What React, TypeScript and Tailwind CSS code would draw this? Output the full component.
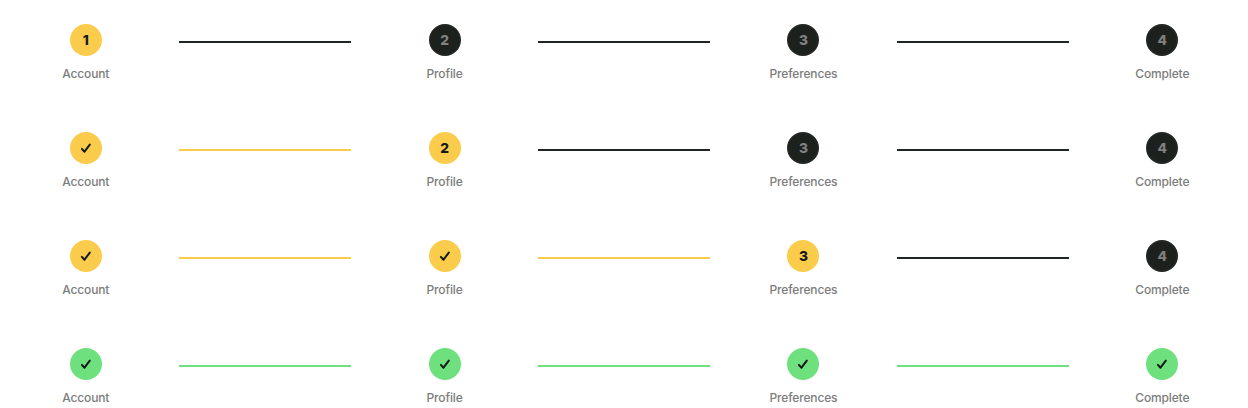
import React from "react";

const labels = ["Account", "Profile", "Preferences", "Complete"];

function Check() {
  return (
    <svg className="size-4" viewBox="0 0 16 16" fill="none" stroke="currentColor" strokeWidth="2" strokeLinecap="round" strokeLinejoin="round">
      <path d="M3.9 8.9 6.5 11.7 11.8 4.6" />
    </svg>
  );
}

function Row({ current }: { current: number }) {
  const finished = current > labels.length;
  return (
    <div className="grid h-[108px] grid-cols-7 gap-2 pt-6">
      {labels.map((label, i) => {
        const n = i + 1;
        const done = n < current;
        const circle = finished
          ? "bg-[#6ee17e] text-[#151a18]"
          : n <= current
            ? "bg-[#fbcc4b] text-[#151a18]"
            : "border-2 border-[#222724] bg-[#1c211e] text-[#808080]";
        const line = finished ? "bg-[#6ee17e]" : done ? "bg-[#fbcc4b]" : "bg-[#202422]";
        return (
          <React.Fragment key={label}>
            <div className="flex flex-col items-center gap-2">
              <div className={`flex size-8 items-center justify-center rounded-full text-[13.75px] font-extrabold ${circle}`}>
                {done ? <Check /> : n}
              </div>
              <span className="text-xs leading-5 font-medium tracking-[-0.14px] text-[#7c7c7c]">{label}</span>
            </div>
            {n < labels.length && <div className={`mt-[17px] h-0.5 ${line}`} />}
          </React.Fragment>
        );
      })}
    </div>
  );
}

export default function App() {
  return (
    <main className="h-[408px] overflow-hidden bg-white font-['Inter',sans-serif]">
      {[1, 2, 3, 5].map((current) => (
        <Row key={current} current={current} />
      ))}
    </main>
  );
}
